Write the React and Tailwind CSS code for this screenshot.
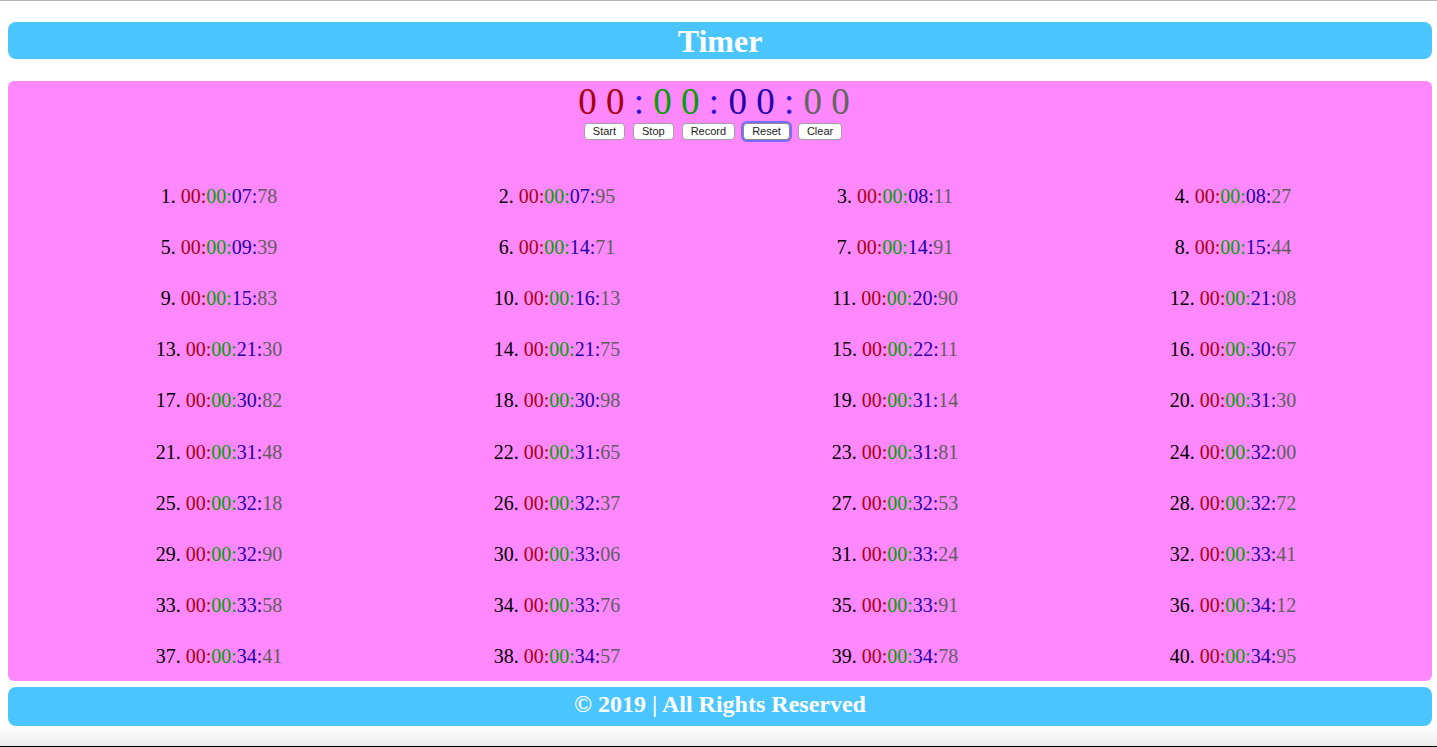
const laps = [
  '00:00:07:78', '00:00:07:95', '00:00:08:11', '00:00:08:27',
  '00:00:09:39', '00:00:14:71', '00:00:14:91', '00:00:15:44',
  '00:00:15:83', '00:00:16:13', '00:00:20:90', '00:00:21:08',
  '00:00:21:30', '00:00:21:75', '00:00:22:11', '00:00:30:67',
  '00:00:30:82', '00:00:30:98', '00:00:31:14', '00:00:31:30',
  '00:00:31:48', '00:00:31:65', '00:00:31:81', '00:00:32:00',
  '00:00:32:18', '00:00:32:37', '00:00:32:53', '00:00:32:72',
  '00:00:32:90', '00:00:33:06', '00:00:33:24', '00:00:33:41',
  '00:00:33:58', '00:00:33:76', '00:00:33:91', '00:00:34:12',
  '00:00:34:41', '00:00:34:57', '00:00:34:78', '00:00:34:95',
];

function Lap({ n, time }) {
  const [h, m, s, ms] = time.split(':');
  return (
    <div className="h-[51.2px] flex items-center justify-center text-[20px] text-black">
      <span>{n}.&nbsp;</span>
      <span className="text-[#a8000f]">{h}:</span>
      <span className="text-[#00a000]">{m}:</span>
      <span className="text-[#2200a8]">{s}:</span>
      <span className="text-[#5e5e5e]">{ms}</span>
    </div>
  );
}

function Btn({ children, focused }) {
  return (
    <button
      className={`h-[17px] px-[8px] bg-white rounded-[4px] text-[11px] leading-none text-[#222] font-['Liberation_Sans',Arial,sans-serif] ${
        focused ? 'border border-[#888] ring-2 ring-[#7a6cff]' : 'border border-[#a0a0a0]'
      }`}
    >
      {children}
    </button>
  );
}

export default function App() {
  return (
    <div className="h-[747px] flex flex-col bg-white border-t border-[#b4b4b4] font-['Liberation_Serif','Times_New_Roman',serif]">
      <header className="mt-[21px] ml-2 mr-[5px] h-[37px] rounded-lg bg-[#4ac5ff] flex items-center justify-center">
        <h1 className="text-white font-bold text-[32px] leading-none">Timer</h1>
      </header>

      <main className="mt-[22px] ml-2 mr-[5px] h-[600px] rounded-md bg-[#ff88ff] flex flex-col">
        <div className="flex justify-center pr-[12px] text-[37px] leading-[41px] whitespace-pre">
          <span className="text-[#a8000a]">0 0</span>
          <span className="text-[#2a10e0]"> : </span>
          <span className="text-[#00a000]">0 0</span>
          <span className="text-[#2a10e0]"> : </span>
          <span className="text-[#2200a8]">0 0</span>
          <span className="text-[#2a10e0]"> : </span>
          <span className="text-[#646464]">0 0</span>
        </div>
        <div className="flex justify-center gap-[8px] mt-[1px] pr-[14px]">
          <Btn>Start</Btn>
          <Btn>Stop</Btn>
          <Btn>Record</Btn>
          <Btn focused>Reset</Btn>
          <Btn>Clear</Btn>
        </div>
        <div className="mt-[30px] pl-[42px] pr-[30px] grid grid-cols-4">
          {laps.map((t, i) => (
            <Lap key={i} n={i + 1} time={t} />
          ))}
        </div>
      </main>

      <footer className="mt-[6px] ml-2 mr-[5px] h-[39px] rounded-lg bg-[#4ac5ff] flex items-center justify-center pb-[5px]">
        <p className="text-white font-bold text-[24px] leading-none">© 2019 | All Rights Reserved</p>
      </footer>

      <div className="flex-1 bg-gradient-to-b from-white to-[#ebebeb] border-b border-black" />
    </div>
  );
}
